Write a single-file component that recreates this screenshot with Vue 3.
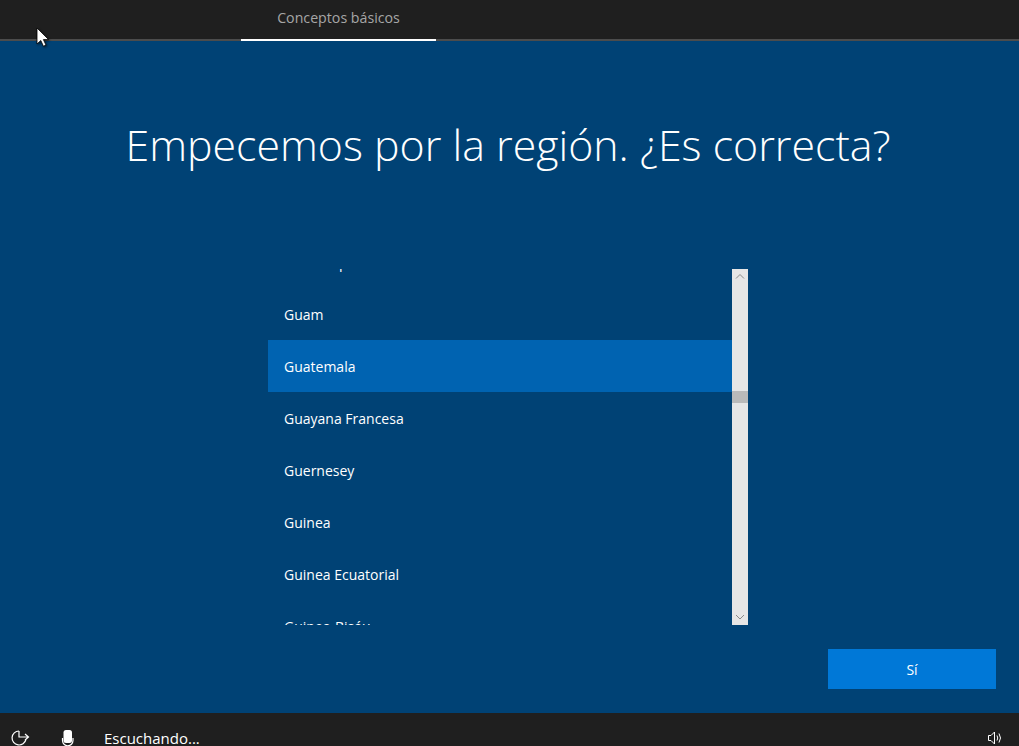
<script setup>
const countries = ['Guadalupe', 'Guam', 'Guatemala', 'Guayana Francesa', 'Guernesey', 'Guinea', 'Guinea Ecuatorial', 'Guinea-Bisáu']
const selected = 'Guatemala'
</script>

<template>
  <div class="oobe">
    <header class="top">
      <div class="tab">Conceptos básicos</div>
      <svg class="cursor" width="15" height="21" viewBox="0 0 15 21">
        <path d="M1 1v16l3.800-3.500 2.600 5.700 2.600-1.100-2.600-5.500h5.200z" fill="#fff" stroke="#000" stroke-width="0.800"/>
      </svg>
    </header>

    <main class="main">
      <h1 class="title">Empecemos por la región. ¿Es correcta?</h1>
      <div class="picker">
        <div class="list">
          <ul class="rows">
            <li v-for="c in countries" :key="c" class="row" :class="{ active: c === selected }">{{ c }}</li>
          </ul>
        </div>
        <div class="scrollbar">
          <svg class="arrow" width="12" height="16" viewBox="0 0 12 16"><path d="M2 9.500l4-4 4 4" fill="none" stroke="#8a8a8a" stroke-width="1"/></svg>
          <div class="track-top"></div>
          <div class="thumb"></div>
          <div class="track-bottom"></div>
          <svg class="arrow" width="12" height="16" viewBox="0 0 12 16"><path d="M2 6l4 4 4-4" fill="none" stroke="#8a8a8a" stroke-width="1"/></svg>
        </div>
      </div>
      <div class="actions">
        <button class="yes">Sí</button>
      </div>
    </main>

    <footer class="bottom">
      <svg class="ico clock" width="20" height="18" viewBox="0 0 20 18">
        <path d="M15.900 10.500A7 7 0 1 1 9 2" fill="none" stroke="#fff" stroke-width="1.200"/>
        <path d="M9 2v6h9.500M15 5l3.500 3-3.500 3" fill="none" stroke="#fff" stroke-width="1.200"/>
      </svg>
      <svg class="ico mic" width="14" height="20" viewBox="0 0 14 20">
        <rect x="2.500" y="1" width="8.500" height="13" rx="2.500" fill="#fff"/>
        <path d="M1.500 9v2.500a5.200 5.200 0 0 0 10.500 0V9M6.700 16.500v3" fill="none" stroke="#fff" stroke-width="1.200"/>
      </svg>
      <span class="listening">Escuchando...</span>
      <svg class="ico speaker" width="16" height="16" viewBox="0 0 16 16">
        <path d="M1.500 5.500h2.500l3.500-3.500v12l-3.500-3.500H1.500z" fill="none" stroke="#fff" stroke-width="1"/>
        <path d="M10 5.500q1.500 2.500 0 5M12 3.500q3 4.500 0 9" fill="none" stroke="#fff" stroke-width="1"/>
      </svg>
    </footer>
  </div>
</template>

<style scoped>
.oobe {
  width: 1019px;
  height: 746px;
  display: flex;
  flex-direction: column;
  overflow: hidden;
  background: #004275;
  color: #fff;
  font-family: "Open Sans", "Noto Sans", "Liberation Sans", sans-serif;
}
.top {
  position: relative;
  height: 41px;
  box-sizing: border-box;
  flex: none;
  padding-left: 241px;
  background: #1f1f1f;
  border-bottom: 2px solid #4c4c4c;
}
.tab {
  width: 195px;
  height: 41px;
  box-sizing: border-box;
  padding-top: 8px;
  text-align: center;
  font-size: 14.2px;
  line-height: 20px;
  color: #a6a6a6;
  border-bottom: 2px solid #fff;
}
.cursor {
  position: absolute;
  left: 36px;
  top: 27px;
  z-index: 2;
  filter: drop-shadow(1px 1px 1px rgba(0, 0, 0, 0.6));
}
.main {
  flex: 1;
  min-height: 0;
  display: flex;
  flex-direction: column;
  align-items: stretch;
}
.title {
  margin: 71px 0 0;
  height: 66px;
  padding-right: 3px;
  text-align: center;
  font-size: 42.85px;
  line-height: 66px;
  font-weight: 300;
  color: #fff;
}
.picker {
  margin: 91px 0 0 268px;
  width: 480px;
  height: 356px;
  display: flex;
}
.list {
  width: 464px;
  height: 356px;
  overflow: hidden;
}
.rows {
  list-style: none;
  margin: -33px 0 0;
  padding: 0;
}
.row {
  height: 52px;
  padding-left: 16px;
  font-size: 14px;
  line-height: 54px;
  color: #fff;
}
.row.active {
  background: #0063b1;
}
.scrollbar {
  width: 16px;
  height: 356px;
  display: flex;
  flex-direction: column;
  align-items: center;
  background: #e6e6e6;
}
.arrow {
  flex: none;
}
.track-top {
  height: 106px;
  flex: none;
}
.thumb {
  width: 16px;
  height: 12px;
  flex: none;
  background: #bababa;
}
.track-bottom {
  flex: 1;
}
.actions {
  display: flex;
  justify-content: flex-end;
  margin-top: 24px;
  padding-right: 23px;
}
.yes {
  width: 168px;
  height: 40px;
  border: 0;
  padding: 0;
  background: #0078d7;
  color: #fff;
  font-family: inherit;
  font-size: 14px;
}
.bottom {
  height: 33px;
  flex: none;
  display: flex;
  align-items: flex-start;
  overflow: hidden;
  background: #1f1f1f;
  position: relative;
}
.ico {
  flex: none;
}
.clock {
  margin: 16px 0 0 10px;
}
.mic {
  margin: 16px 0 0 31px;
}
.listening {
  margin: 15px 0 0 29px;
  font-size: 15px;
  line-height: 20px;
  color: #fff;
}
.speaker {
  margin: 17px 16px 0 auto;
}
</style>
